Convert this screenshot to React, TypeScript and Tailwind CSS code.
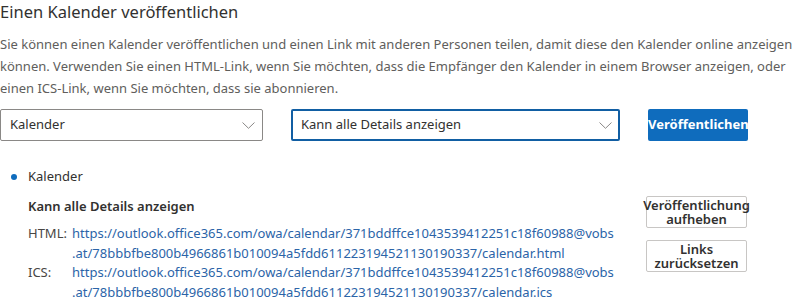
import React from "react";

function Chevron() {
  return (
    <svg width="13" height="7" viewBox="0 0 13 7" fill="none" className="shrink-0">
      <path d="M0.5 0.5 L6.5 6.3 L12.5 0.5" stroke="#8a8886" strokeWidth="1" />
    </svg>
  );
}

function Select({ label, focused, className }: { label: string; focused?: boolean; className: string }) {
  return (
    <div
      className={
        "h-[32px] flex items-center justify-between rounded-[2px] bg-white " +
        (focused ? "border-2 border-[#115ea3] pl-[8px] pr-[6px]" : "border border-[#8a8886] pl-[9px] pr-[7px]") +
        " " +
        className
      }
    >
      <span className="text-[13px] text-[#323130]">{label}</span>
      <Chevron />
    </div>
  );
}

const base = "https://outlook.office365.com/owa/calendar/371bddffce1043539412251c18f60988@vobs";
const rest = ".at/78bbbfbe800b4966861b010094a5fdd611223194521130190337/calendar";

export default function App() {
  return (
    <div className="w-[797px] h-[300px] overflow-hidden bg-white font-['Noto_Sans',sans-serif] text-[#323130]">
      <h1 className="text-[16.5px] leading-[24px] text-[#323130]">Einen Kalender veröffentlichen</h1>

      <p className="mt-[9px] text-[13px] leading-[22px] text-[#605e5c] whitespace-nowrap">
        Sie können einen Kalender veröffentlichen und einen Link mit anderen Personen teilen, damit diese den Kalender online anzeigen
        <br />
        können. Verwenden Sie einen HTML-Link, wenn Sie möchten, dass die Empfänger den Kalender in einem Browser anzeigen, oder
        <br />
        einen ICS-Link, wenn Sie möchten, dass sie abonnieren.
      </p>

      <div className="mt-[10px] flex items-center">
        <Select label="Kalender" className="w-[263px]" />
        <Select label="Kann alle Details anzeigen" focused className="ml-[28px] w-[329px]" />
        <button className="ml-[28px] h-[32px] w-[100px] rounded-[2px] bg-[#0f6cbd] text-[13px] font-bold text-white">
          Veröffentlichen
        </button>
      </div>

      <div className="mt-[26px] flex items-center h-[20px] pl-[11px]">
        <span className="w-[6px] h-[6px] rounded-full bg-[#0f6cbd]" />
        <span className="ml-[11px] text-[13px] text-[#323130]">Kalender</span>
      </div>

      <div className="mt-[9px] flex">
        <div className="pl-[28px] w-[646px]">
          <div className="text-[13px] leading-[20px] font-semibold text-[#323130]">Kann alle Details anzeigen</div>
          <div className="mt-[8px] grid grid-cols-[44px_1fr] text-[13px] leading-[19.5px]">
            <span className="text-[#484644]">HTML:</span>
            <span className="text-[#2b64a8] whitespace-nowrap">
              {base}
              <br />
              {rest}.html
            </span>
            <span className="text-[#484644]">ICS:</span>
            <span className="text-[#2b64a8] whitespace-nowrap">
              {base}
              <br />
              {rest}.ics
            </span>
          </div>
        </div>
        <div className="flex flex-col gap-[12px]">
          <button className="w-[101px] h-[32px] border border-[#c8c6c4] rounded-[2px] bg-white text-[13px] leading-[14px] font-semibold text-[#323130] whitespace-nowrap flex flex-col items-center justify-center">
            <span>Veröffentlichung</span>
            <span>aufheben</span>
          </button>
          <button className="w-[101px] h-[32px] border border-[#c8c6c4] rounded-[2px] bg-white text-[13px] leading-[14px] font-semibold text-[#323130] flex flex-col items-center justify-center">
            <span>Links</span>
            <span>zurücksetzen</span>
          </button>
        </div>
      </div>
    </div>
  );
}
